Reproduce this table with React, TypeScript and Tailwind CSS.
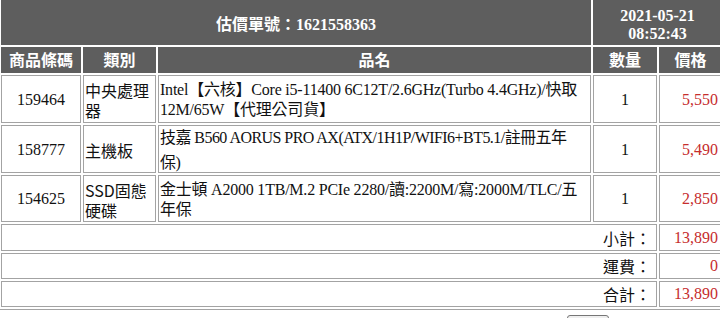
import type { ReactNode } from "react";

type Item = {
  code: string;
  category: string;
  name: string[];
  qty: number;
  price: string;
  cls: string;
};

// lines are split where the original page wraps them
const ITEMS: Item[] = [
  {
    code: "159464",
    category: "中央處理器",
    name: ["Intel【六核】Core i5-11400 6C12T/2.6GHz(Turbo 4.4GHz)/快取", "12M/65W【代理公司貨】"],
    qty: 1,
    price: "5,550",
    cls: "leading-[20px] tracking-[-0.22px]",
  },
  {
    code: "158777",
    category: "主機板",
    name: ["技嘉 B560 AORUS PRO AX(ATX/1H1P/WIFI6+BT5.1/註冊五年", "保)"],
    qty: 1,
    price: "5,490",
    cls: "leading-[25px] tracking-[-0.55px]",
  },
  {
    code: "154625",
    category: "SSD固態硬碟",
    name: ["金士頓 A2000 1TB/M.2 PCIe 2280/讀:2200M/寫:2000M/TLC/五", "年保"],
    qty: 1,
    price: "2,850",
    cls: "leading-[20px] tracking-[-0.22px]",
  },
];

const TOTALS = [
  { label: "小計：", value: "13,890" },
  { label: "運費：", value: "0" },
  { label: "合計：", value: "13,890" },
];

// dark header cell
function Head({ children, className = "" }: { children: ReactNode; className?: string }) {
  return (
    <div className={`flex items-center justify-center bg-[#5e5e5e] font-bold text-white ${className}`}>
      {children}
    </div>
  );
}

// white body cell with the thin gray border
function Cell({ children, className = "" }: { children?: ReactNode; className?: string }) {
  return <div className={`flex items-center border border-[#a3a3a3] bg-white px-[1px] ${className}`}>{children}</div>;
}

export default function App() {
  return (
    <div
      className="h-[318px] w-[720px] overflow-hidden bg-white text-[16px] text-[#111]"
      style={{ fontFamily: '"Liberation Serif", "Noto Sans CJK TC", serif' }}
    >
      {/* table is scrolled a few px up/left, like the original page */}
      <div className="-mt-[4px] -ml-[2px] w-[727px] border border-[#a3a3a3] p-[2px]">
        <div className="grid grid-cols-[80px_73px_433px_64px_63px] grid-rows-[46px_26px_48px_48px_47px_27px_26px_26px] gap-[2px]">
          <Head className="col-span-3 pt-[6px]">估價單號：1621558363</Head>
          <Head className="col-span-2 flex-col pt-[6px] leading-[18px]">
            <span>2021-05-21</span>
            <span>08:52:43</span>
          </Head>

          <Head className="pt-[1px]">商品條碼</Head>
          <Head className="pt-[1px]">類別</Head>
          <Head className="pt-[1px]">品名</Head>
          <Head className="pt-[1px]">數量</Head>
          <Head className="pt-[1px]">價格</Head>

          {ITEMS.map((it) => (
            <Row key={it.code} item={it} />
          ))}

          {TOTALS.map((t) => (
            <Total key={t.label} label={t.label} value={t.value} />
          ))}
        </div>
      </div>

      <div className="mt-[5px] flex">
        <button className="ml-[567px] h-[24px] w-[42px] rounded-[3px] border border-[#767676] bg-[#efefef]" />
      </div>
    </div>
  );
}

function Row({ item }: { item: Item }) {
  return (
    <>
      <Cell className="justify-center pt-[1px]">{item.code}</Cell>
      <Cell className="pt-[2px] leading-[20px]">
        <span style={{ fontFamily: '"Noto Sans CJK TC", sans-serif' }}>{item.category}</span>
      </Cell>
      <Cell className={`pt-[2px] whitespace-nowrap ${item.cls}`}>
        <span>
          {item.name[0]}
          <br />
          {item.name[1]}
        </span>
      </Cell>
      <Cell className="justify-center pt-[1px]">{item.qty}</Cell>
      <Cell className="justify-end pt-[1px] pr-[3px] text-[#c62d2d]">{item.price}</Cell>
    </>
  );
}

function Total({ label, value }: { label: string; value: string }) {
  return (
    <>
      <Cell className="col-span-4 justify-end pr-[5px]">
        <span style={{ fontFamily: '"Noto Sans CJK TC", sans-serif' }}>{label}</span>
      </Cell>
      <Cell className="justify-end pr-[3px] text-[#c62d2d]">{value}</Cell>
    </>
  );
}
